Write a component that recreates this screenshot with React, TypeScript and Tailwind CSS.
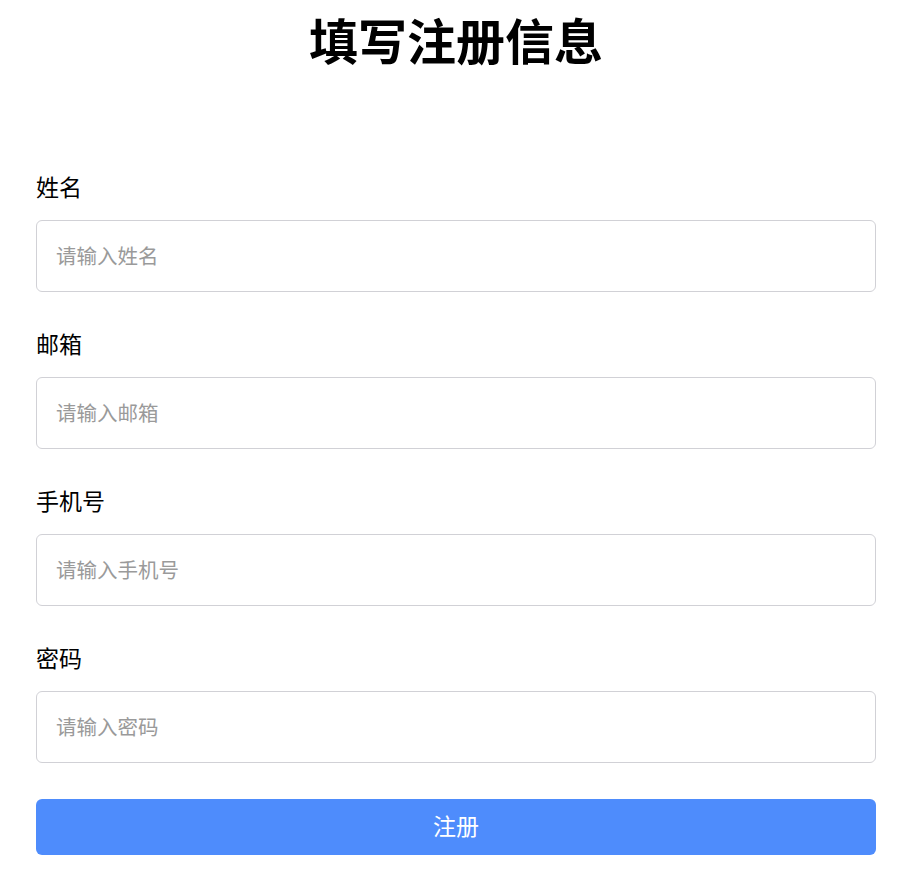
const fields = [
  { label: '姓名', placeholder: '请输入姓名', type: 'text' },
  { label: '邮箱', placeholder: '请输入邮箱', type: 'email' },
  { label: '手机号', placeholder: '请输入手机号', type: 'tel' },
  { label: '密码', placeholder: '请输入密码', type: 'password' },
]

export default function App() {
  return (
    <div
      className="min-h-screen bg-white pl-9 pr-[34px]"
      style={{ fontFamily: '"Noto Sans CJK SC", "Noto Sans", sans-serif' }}
    >
      <h1 className="pt-[14px] text-center text-[49px] font-bold leading-[49px] text-black">
        填写注册信息
      </h1>

      <form className="mt-[108px]" onSubmit={(e) => e.preventDefault()}>
        {fields.map((f) => (
          <div key={f.label} className="mb-9">
            <label className="block text-[23px] leading-[30px] text-black">{f.label}</label>
            <input
              type={f.type}
              placeholder={f.placeholder}
              className="mt-[19px] block h-[72px] w-full rounded-md border border-[#d1d1d6] px-[19px] pb-[3px] text-[20.5px] text-black outline-none placeholder:text-[#9a9a9a]"
            />
          </div>
        ))}
        <button
          type="submit"
          className="block h-14 w-full rounded-md bg-[#4e8cfc] pb-1 text-[23px] text-white"
        >
          注册
        </button>
      </form>
    </div>
  )
}
